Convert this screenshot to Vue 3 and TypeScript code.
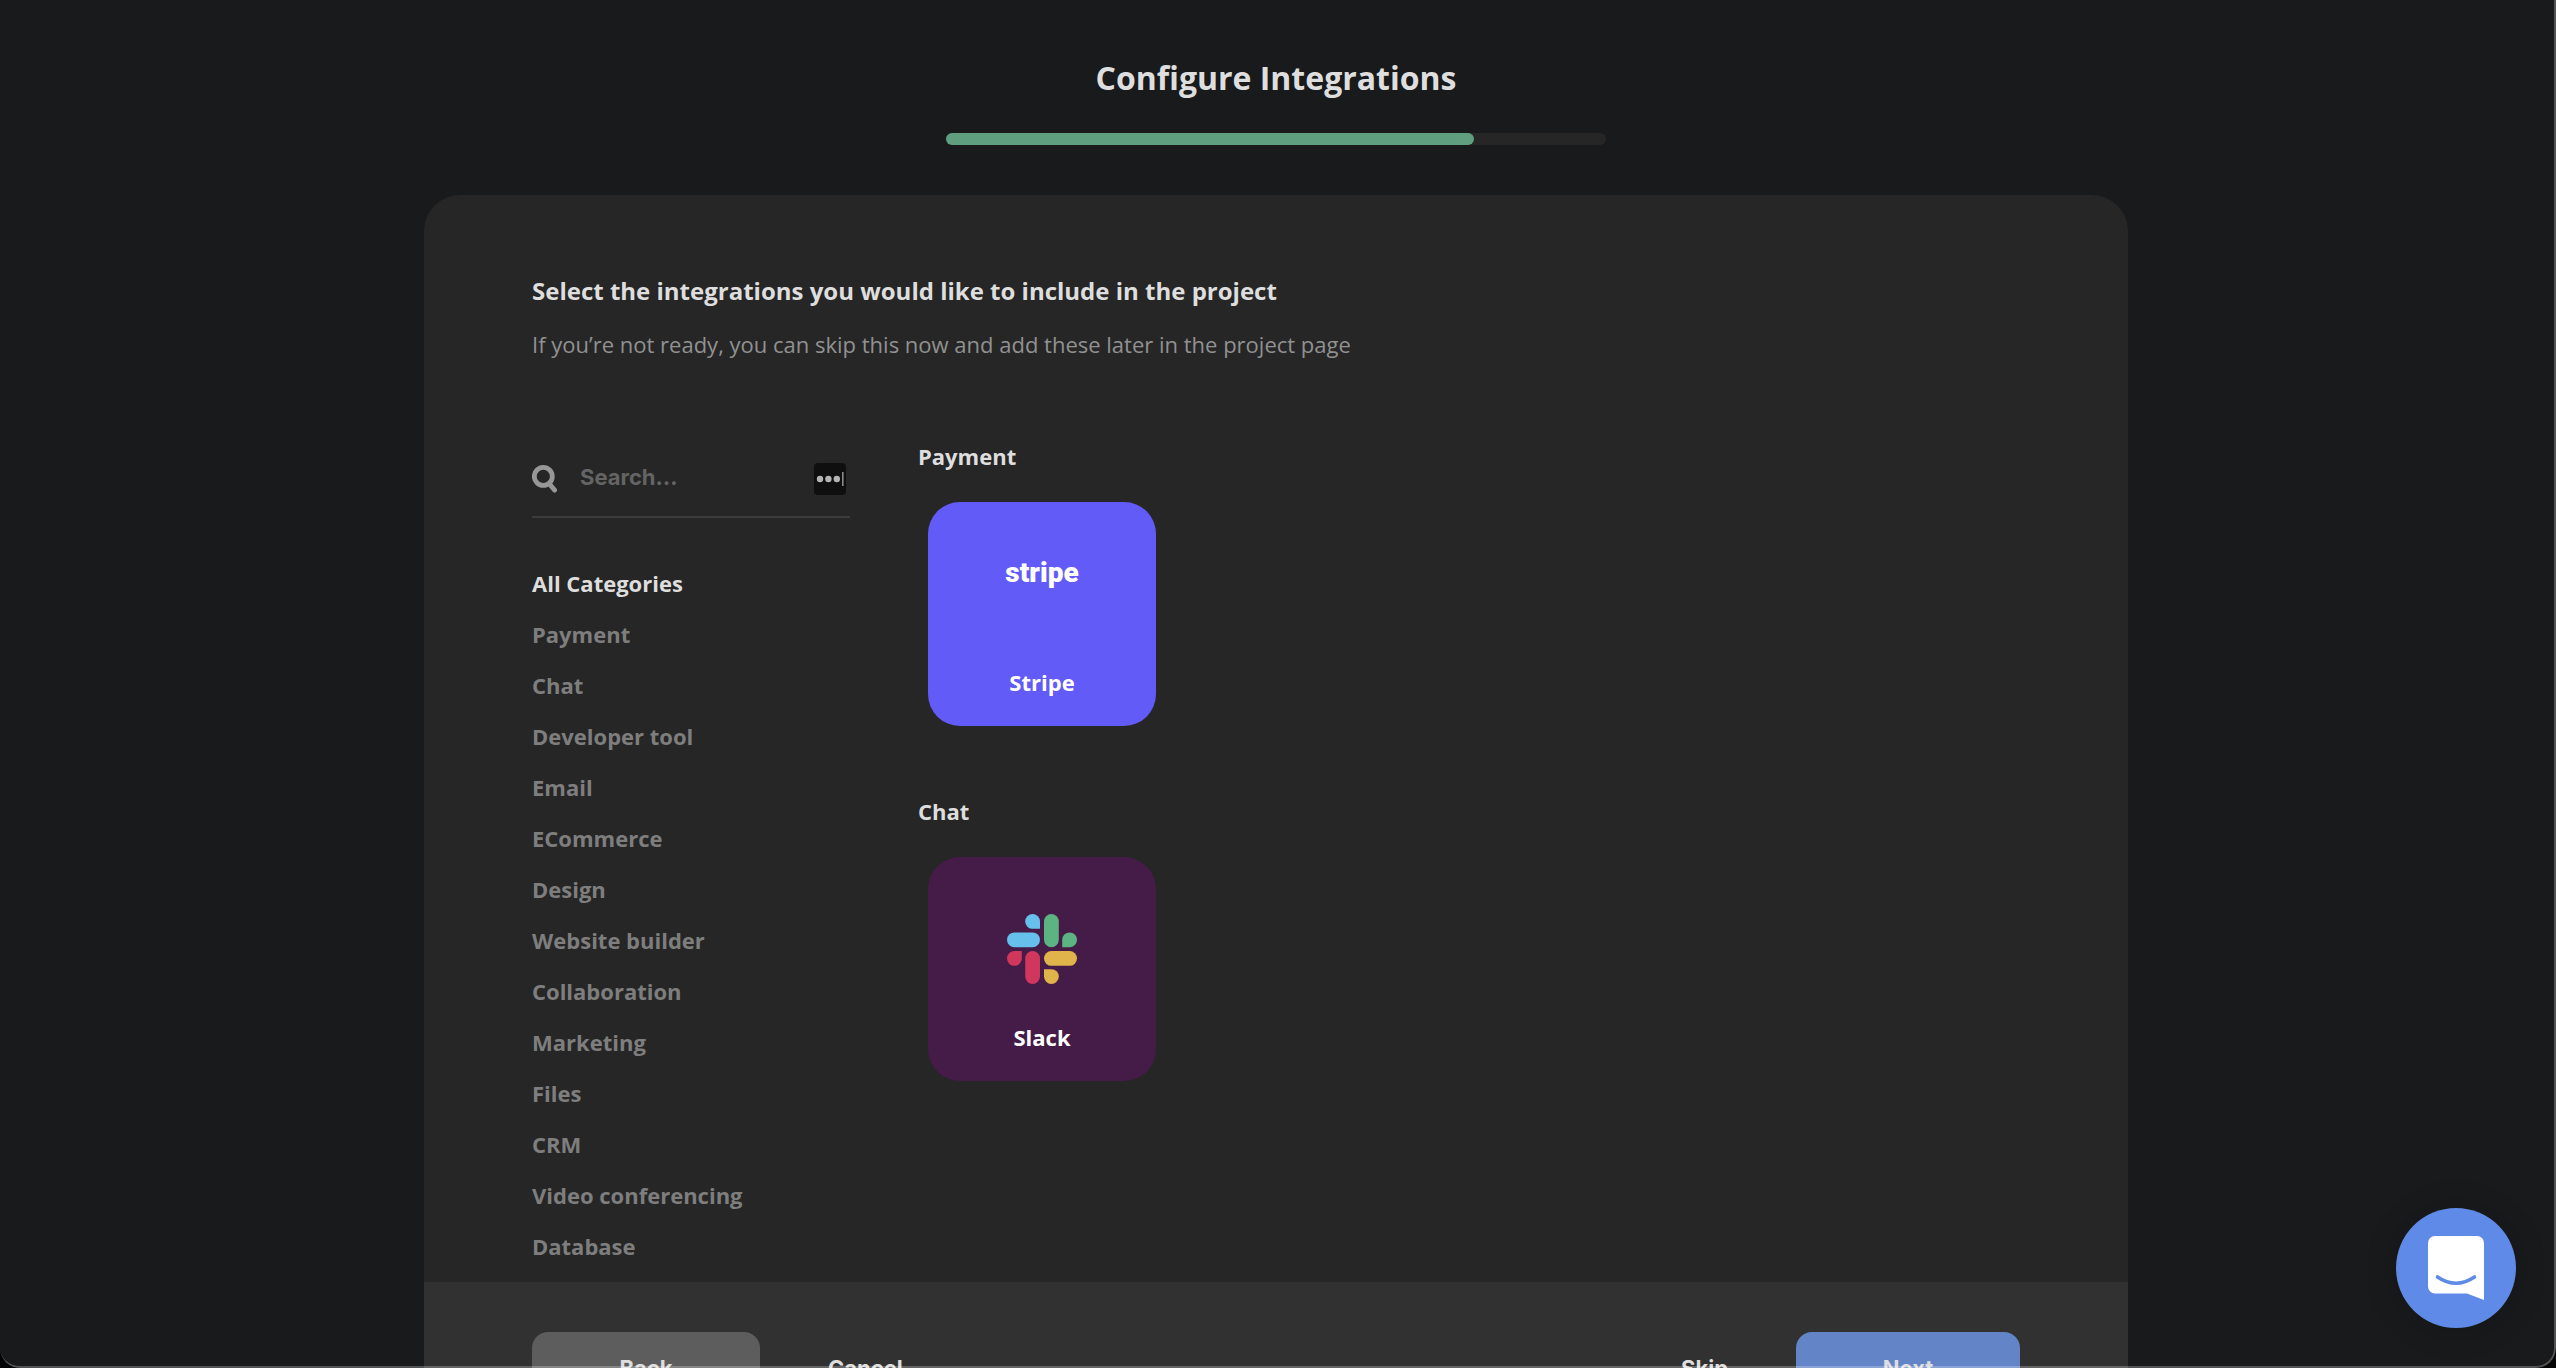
<script setup lang="ts">
import { ref } from 'vue'

interface Integration {
  id: string
  name: string
}

interface Group {
  title: string
  items: Integration[]
}

const progress = 80
const search = ref('')
const active = ref('All Categories')

const categories: string[] = [
  'All Categories',
  'Payment',
  'Chat',
  'Developer tool',
  'Email',
  'ECommerce',
  'Design',
  'Website builder',
  'Collaboration',
  'Marketing',
  'Files',
  'CRM',
  'Video conferencing',
  'Database',
]

const groups: Group[] = [
  { title: 'Payment', items: [{ id: 'stripe', name: 'Stripe' }] },
  { title: 'Chat', items: [{ id: 'slack', name: 'Slack' }] },
]
</script>

<template>
  <div class="window">
    <header class="top">
      <h1 class="title">Configure Integrations</h1>
      <div class="progress" role="progressbar" aria-label="Setup progress" :aria-valuenow="progress">
        <div class="progress-fill" :style="{ width: progress + '%' }"></div>
      </div>
    </header>

    <main class="panel">
      <div class="panel-body">
        <h2 class="lead">Select the integrations you would like to include in the project</h2>
        <p class="hint">If you’re not ready, you can skip this now and add these later in the project page</p>

        <div class="columns">
          <aside class="sidebar">
            <label class="search">
              <svg class="search-icon" viewBox="0 0 26 28" aria-hidden="true">
                <circle cx="11.3" cy="11.4" r="9" fill="none" stroke="#979797" stroke-width="4.8" />
                <path d="M17.5 19l5 6" stroke="#979797" stroke-width="5" stroke-linecap="round" />
              </svg>
              <input v-model="search" class="search-input" type="text" placeholder="Search…" aria-label="Search" />
              <svg class="search-badge" viewBox="0 0 32 32" aria-hidden="true">
                <rect width="32" height="32" rx="4" fill="#0f0f0f" />
                <circle cx="6" cy="16" r="3.2" fill="#b4b4b4" />
                <circle cx="14.4" cy="16" r="3.2" fill="#b4b4b4" />
                <circle cx="22.8" cy="16" r="3.2" fill="#b4b4b4" />
                <rect x="28" y="9" width="1.6" height="14" fill="#8a8a8a" />
              </svg>
            </label>
            <nav class="categories">
              <a
                v-for="category in categories"
                :key="category"
                href="#"
                class="category"
                :class="{ active: category === active }"
                @click.prevent="active = category"
                >{{ category }}</a
              >
            </nav>
          </aside>

          <div class="groups">
            <section v-for="group in groups" :key="group.title" class="group">
              <h3 class="group-title">{{ group.title }}</h3>
              <div class="tiles">
                <button v-for="item in group.items" :key="item.id" type="button" class="tile" :class="item.id">
                  <span v-if="item.id === 'stripe'" class="wordmark">stripe</span>
                  <svg v-else class="slack-logo" viewBox="0 0 70 70" aria-hidden="true">
                    <g fill="#67c0ec">
                      <path d="M33 14.8h-7.4A7.4 7.4 0 1 1 33 7.4z" />
                      <rect x="0" y="18.4" width="33" height="14.8" rx="7.4" />
                    </g>
                    <g fill="#5db483">
                      <rect x="37" y="0" width="14.8" height="33.2" rx="7.4" />
                      <path d="M55.2 33.2v-7.4a7.4 7.4 0 1 1 7.4 7.4z" />
                    </g>
                    <g fill="#e1b34b">
                      <rect x="37" y="37" width="33" height="14.8" rx="7.4" />
                      <path d="M37 55.2h7.4A7.4 7.4 0 1 1 37 62.6z" />
                    </g>
                    <g fill="#d1365d">
                      <path d="M14.8 37v7.4A7.4 7.4 0 1 1 7.4 37z" />
                      <rect x="18.2" y="37" width="14.8" height="33" rx="7.4" />
                    </g>
                  </svg>
                  <span class="tile-name">{{ item.name }}</span>
                </button>
              </div>
            </section>
          </div>
        </div>
      </div>

      <footer class="actions">
        <button type="button" class="btn back">Back</button>
        <button type="button" class="btn plain">Cancel</button>
        <span class="spacer"></span>
        <button type="button" class="btn plain">Skip</button>
        <button type="button" class="btn next">Next</button>
      </footer>
    </main>

    <button type="button" class="messenger" aria-label="Open chat">
      <svg viewBox="0 0 56 64" width="56" height="64" aria-hidden="true">
        <path d="M7 0h42a7 7 0 0 1 7 7v57L39 57.5H7a7 7 0 0 1-7-7V7a7 7 0 0 1 7-7z" fill="#fff" />
        <path d="M9.5 41q18.500 12.500 37 0" fill="none" stroke="#5f8ae8" stroke-width="3.600" stroke-linecap="round" />
      </svg>
    </button>
    <div class="frame" aria-hidden="true"></div>
  </div>
</template>

<style>
body {
  background: #050505;
}
</style>

<style scoped>
.window {
  position: relative;
  box-sizing: border-box;
  height: 100vh;
  overflow: hidden;
  padding: 56px 4px 0 0;
  border-radius: 0 0 20px 20px;
  background: #191a1c;
  color: #dedede;
  font-family: 'Open Sans', sans-serif;
  font-size: 22px;
  line-height: 32px;
}

.window * {
  box-sizing: border-box;
}

h1,
h2,
h3,
p {
  margin: 0;
}

button {
  border: 0;
  padding: 0;
  color: inherit;
  cursor: pointer;
}

.top {
  display: flex;
  flex-direction: column;
  align-items: center;
  gap: 33px;
}

.title {
  font-size: 32px;
  line-height: 44px;
  font-weight: 700;
}

.progress {
  width: 100%;
  max-width: 660px;
  height: 12px;
  border-radius: 6px;
  background: #262626;
}

.progress-fill {
  height: 100%;
  border-radius: 6px;
  background: #5f9f80;
}

.panel {
  width: 90%;
  max-width: 1704px;
  margin: 50px auto 0;
  border-radius: 36px;
  overflow: hidden;
  background: #262626;
}

.panel-body {
  padding: 80px 108px 10px;
}

.lead {
  font-size: 24px;
  font-weight: 700;
}

.hint {
  margin-top: 21px;
  color: #919191;
}

.columns {
  display: flex;
  gap: 68px;
  margin-top: 80px;
}

.sidebar {
  flex: none;
  width: 318px;
}

.search {
  display: flex;
  align-items: center;
  height: 78px;
  padding: 2px 4px 0 0;
  border-bottom: 2px solid #3c3c3c;
}

.search-icon {
  flex: none;
  width: 26px;
  height: 28px;
}

.search-input {
  flex: 1;
  min-width: 0;
  height: 32px;
  margin-left: 22px;
  padding: 0 0 4px;
  border: 0;
  outline: 0;
  background: none;
  color: #dedede;
  font: 700 22px/28px Inter, sans-serif;
}

.search-input::placeholder {
  color: #646464;
  opacity: 1;
}

.search-badge {
  flex: none;
  width: 32px;
  height: 32px;
}

.categories {
  display: flex;
  flex-direction: column;
  margin-top: 40px;
}

.category {
  color: #7e7e7e;
  font-weight: 700;
  line-height: 51px;
  text-decoration: none;
}

.category.active {
  color: #dedede;
}

.groups {
  display: flex;
  flex: 1;
  flex-direction: column;
  gap: 69px;
}

.group-title {
  font-size: 22px;
  font-weight: 700;
}

.tiles {
  display: flex;
  flex-wrap: wrap;
  gap: 20px;
  margin: 30px 10px 0;
}

.tile {
  display: flex;
  flex-direction: column;
  align-items: center;
  justify-content: space-between;
  width: 228px;
  height: 224px;
  padding: 57px 0 28px;
  border-radius: 32px;
  color: #fff;
  font: 700 22px/32px 'Open Sans', sans-serif;
}

.stripe {
  background: #635bf8;
}

.slack {
  background: #451b48;
}

.wordmark {
  font: 900 28px/28px Roboto, sans-serif;
}

.slack-logo {
  width: 70px;
  height: 70px;
}

.actions {
  display: flex;
  align-items: center;
  padding: 50px 108px;
  background: #313131;
}

.btn {
  height: 72px;
  border-radius: 16px;
  background: none;
  font: 700 22px/32px Inter, sans-serif;
}

.back {
  width: 228px;
  background: #5d5d5d;
}

.plain {
  padding: 0 68px;
}

.spacer {
  flex: 1;
}

.next {
  width: 224px;
  background: #6384c7;
}

.messenger {
  position: absolute;
  right: 40px;
  bottom: 40px;
  display: grid;
  place-items: center;
  width: 120px;
  height: 120px;
  border-radius: 50%;
  background: #5f8ae8;
  box-shadow: 0 2px 32px rgba(0, 0, 0, 0.2);
}

/* Thin light edge along the right and bottom of the window */
.frame {
  position: absolute;
  inset: 0;
  border-right: 2px solid rgba(255, 255, 255, 0.25);
  border-bottom: 2px solid rgba(255, 255, 255, 0.25);
  border-radius: 0 0 20px 20px;
  pointer-events: none;
}
</style>
